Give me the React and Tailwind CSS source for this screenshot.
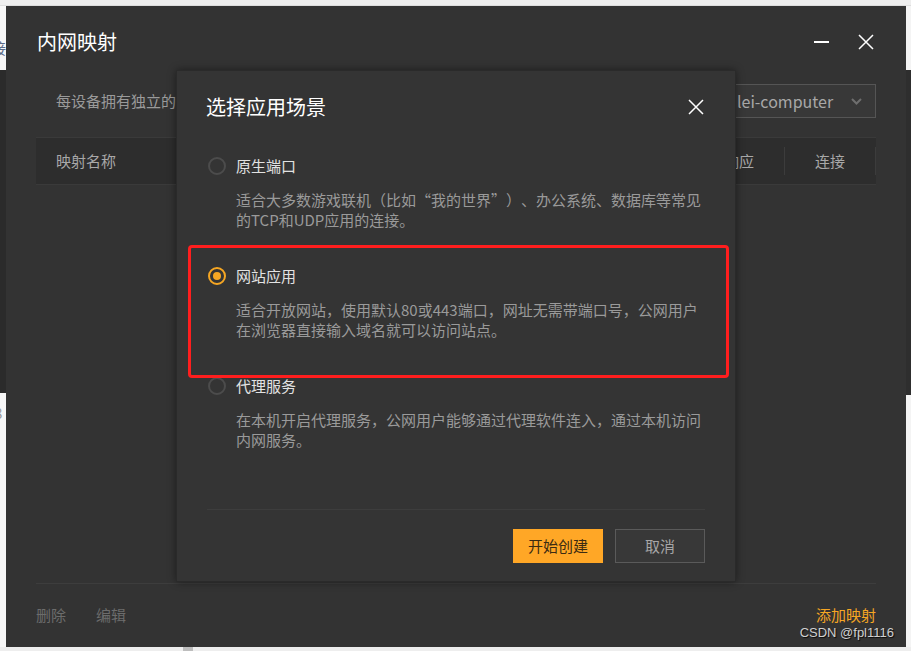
import React from 'react';

function CloseIcon({ size = 16 }) {
  return (
    <svg width={size} height={size} viewBox="0 0 16 16" fill="none">
      <path d="M1 1L15 15M15 1L1 15" stroke="#ffffff" strokeWidth="1.5" />
    </svg>
  );
}

function Radio({ checked }) {
  if (checked) {
    return (
      <span className="flex items-center justify-center w-[18px] h-[18px] rounded-full border-2 border-[#f5a623]">
        <span className="w-[8px] h-[8px] rounded-full bg-[#f5a623]" />
      </span>
    );
  }
  return <span className="block w-[18px] h-[18px] rounded-full border-2 border-[#4c4c4c]" />;
}

const options = [
  {
    title: '原生端口',
    lines: ['适合大多数游戏联机（比如“我的世界”）、办公系统、数据库等常见', '的TCP和UDP应用的连接。'],
  },
  {
    title: '网站应用',
    lines: ['适合开放网站，使用默认80或443端口，网址无需带端口号，公网用户', '在浏览器直接输入域名就可以访问站点。'],
    checked: true,
  },
  {
    title: '代理服务',
    lines: ['在本机开启代理服务，公网用户能够通过代理软件连入，通过本机访问', '内网服务。'],
  },
];

function SceneDialog() {
  return (
    <div className="absolute left-[170px] top-[64px] w-[560px] bg-[#343434] border border-[#2a2a2a] shadow-[0_0_8px_rgba(0,0,0,0.45)]">
      {/* header */}
      <div className="flex items-center justify-between h-[72px] pl-[29px] pr-[31px]">
        <span className="text-[20px] leading-[28px] text-white">选择应用场景</span>
        <CloseIcon />
      </div>

      <div className="pt-[13px] pl-[31px]">
        {options.map((o, i) => (
          <div key={o.title} className={i > 0 ? 'mt-[36px]' : ''}>
            <div className="flex items-center h-[20px] gap-[10px]">
              <Radio checked={o.checked} />
              <span className="text-[15px] leading-[20px] text-[#e2e2e2]">{o.title}</span>
            </div>
            <div className="mt-[14px] pl-[28px] text-[15px] leading-[20px] text-[#9a9a9a] [text-spacing-trim:space-all]">
              {o.lines.map((l) => (
                <div key={l} className="whitespace-nowrap">{l}</div>
              ))}
            </div>
          </div>
        ))}
      </div>

      <div className="mx-[30px] mt-[59px] h-px bg-[#3d3d3d]" />

      <div className="flex justify-end gap-[12px] px-[30px] mt-[19px] pb-[18px]">
        <button className="w-[90px] h-[34px] bg-[#ffa726] text-[15px] text-[#3b2b12]">开始创建</button>
        <button className="w-[90px] h-[34px] border border-[#5a5a5a] bg-[#383838] text-[15px] text-[#a6a6a6]">取消</button>
      </div>

      {/* annotation box */}
      <div className="absolute left-[11px] top-[174px] w-[541px] h-[133px] border-[3px] border-[#ff1e1e] rounded-[4px]" />
    </div>
  );
}

function MainWindow() {
  return (
    <div className="relative w-[900px] h-[641px] bg-[#333333] flex flex-col">
      {/* title bar */}
      <div className="flex items-center justify-between h-[72px] pl-[31px] pr-[32px]">
        <span className="text-[20px] leading-[28px] text-white">内网映射</span>
        <div className="flex items-center gap-[29px]">
          <span className="block w-[15px] h-[1.5px] bg-white" />
          <CloseIcon />
        </div>
      </div>

      <div className="flex-1 flex flex-col px-[30px]">
        <div className="flex items-center justify-between h-[34px] mt-[6px]">
          <span className="pl-[20px] text-[15px] text-[#9a9a9a]">每设备拥有独立的</span>
          <div className="flex items-center justify-between w-[160px] h-[34px] border border-[#555555] bg-[#383838] pl-[20px] pr-[13px]">
            <span className="text-[16px] text-[#a8a8a8]">lei-computer</span>
            <svg width="11" height="7" viewBox="0 0 11 7" fill="none">
              <path d="M1 1L5.5 5.5L10 1" stroke="#6e6e6e" strokeWidth="2" />
            </svg>
          </div>
        </div>

        <div className="flex items-center h-[48px] mt-[19px] bg-[#2d2d2d] border-y border-[#3a3a3a] text-[15px] text-[#a8a8a8]">
          <span className="flex-1 pl-[20px]">映射名称</span>
          <span className="w-[90px] text-center">公网地址</span>
          <span className="w-px h-[28px] bg-[#3c3c3c]" />
          <span className="w-[90px] text-center">响应</span>
          <span className="w-px h-[28px] bg-[#3c3c3c]" />
          <span className="w-[90px] text-center">连接</span>
          <span className="w-px h-[28px] bg-[#3c3c3c]" />
        </div>

        <div className="flex-1 border-b border-[#3d3d3d]" />

        <div className="flex items-center justify-between h-[63px] text-[15px]">
          <div className="flex gap-[30px] text-[#6c6c6c]">
            <span>删除</span>
            <span>编辑</span>
          </div>
          <span className="text-[#f5a623]">添加映射</span>
        </div>
      </div>

      <SceneDialog />
    </div>
  );
}

export default function App() {
  return (
    <div lang="zh-CN" className="relative w-[911px] h-[651px] overflow-hidden bg-[#f0f0f0] font-['Noto_Sans_CJK_SC','Noto_Sans',sans-serif]">
      <div className="h-[6px] bg-[#eeeeee] border-b border-[#dddddd]" />
      <div className="flex">
        {/* left backdrop strip */}
        <div className="w-[6px] flex flex-col overflow-hidden">
          <div className="h-[64px] bg-[#f7f7f7] flex items-center">
            <span className="ml-[-9px] text-[15px] leading-[20px] text-[#5b6a88] mt-[20px]">接</span>
          </div>
          <div className="h-[323px] bg-[#2b2b2b]" />
          <div className="flex-1 bg-[#f7f7f7]">
            <span className="block ml-[-6px] mt-[10px] text-[15px] leading-[20px] text-[#999999]">8</span>
          </div>
        </div>

        <MainWindow />

        {/* right backdrop strip */}
        <div className="flex-1 flex flex-col">
          <div className="h-[64px] bg-[#f4f4f4]" />
          <div className="h-[325px] bg-[#2e2e2e]" />
          <div className="flex-1 bg-[#f4f4f4]" />
        </div>
      </div>
      <div className="h-[4px] bg-[#eeeeee] pl-[183px]">
        <div className="w-[10px] h-[4px] bg-[#bdbdbd]" />
      </div>

      <span className="absolute right-[17px] top-[624px] text-[13px] leading-[18px] text-[#d0d0d0] font-['Liberation_Sans',sans-serif] [text-shadow:1px_1px_1px_rgba(0,0,0,0.8)]">
        CSDN @fpl1116
      </span>
    </div>
  );
}
